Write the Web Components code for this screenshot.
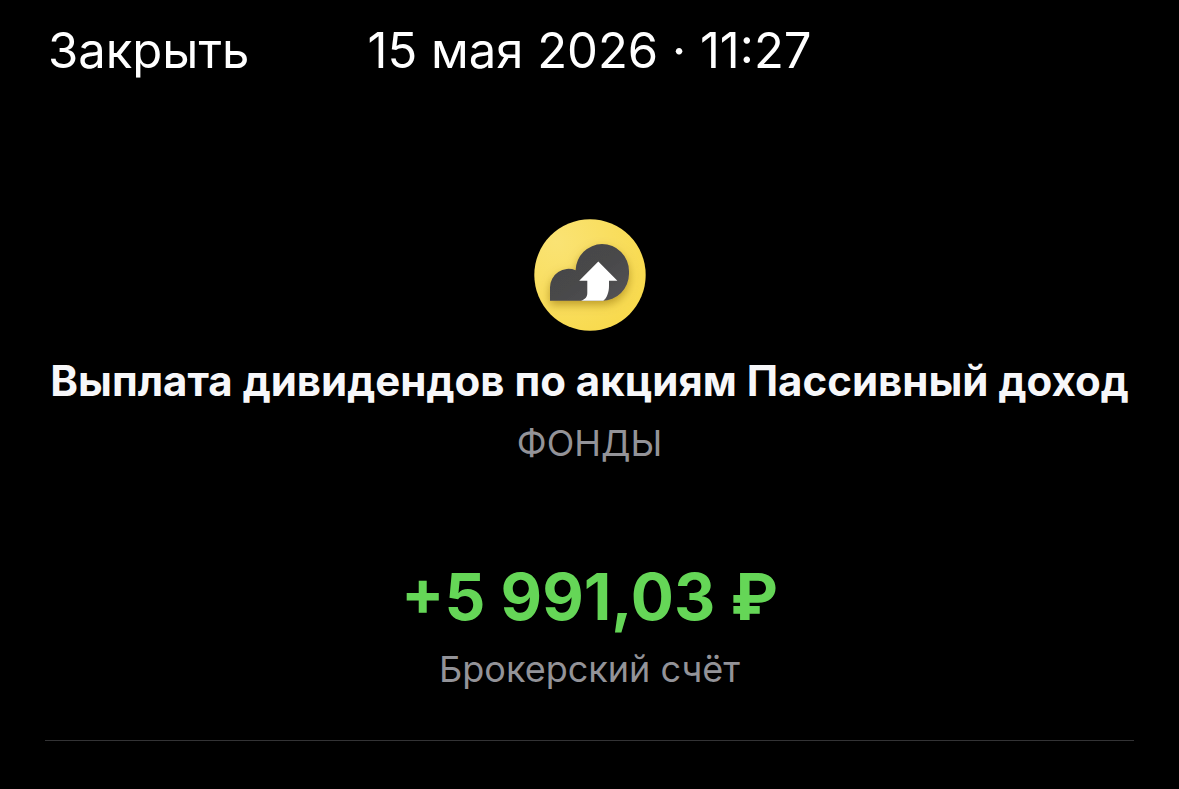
<!DOCTYPE html>
<html lang="ru">
<head>
  <meta charset="utf-8">
  <meta name="viewport" content="width=device-width, initial-scale=1">
  <title>Операция</title>
  <style>
    body {
      margin: 0;
      background-color: #000;
      color: #fff;
      font-family: Inter, "Liberation Sans", sans-serif;
    }
  </style>
</head>
<body>
  <operation-page></operation-page>

  <script>
    class SheetHeader extends HTMLElement {
      constructor() {
        super();
        this.attachShadow({ mode: "open" });
      }

      connectedCallback() {
        this.shadowRoot.innerHTML = `
          <style>
          :host {
            display: grid;
            grid-template-columns: 1fr auto 1fr;
            align-items: center;
            padding: 21px 48px 0;
            font-size: 49px;
            line-height: 60px;
          }
          button {
            justify-self: start;
            padding: 0;
            border: 0;
            background: none;
            color: inherit;
            font: inherit;
            cursor: pointer;
          }
          </style>
          <button type="button">Закрыть</button>
          <slot></slot>
        `;
      }
    }

    class FundLogo extends HTMLElement {
      constructor() {
        super();
        this.attachShadow({ mode: "open" });
      }

      connectedCallback() {
        this.shadowRoot.innerHTML = `
          <style>
          :host {
            display: block;
            width: 112px;
            height: 112px;
          }
          svg {
            display: block;
          }
          </style>
          <svg width="112" height="112" viewBox="0 0 112 112" aria-hidden="true">
            <defs>
              <radialGradient id="coin" cx="0.2" cy="0.2" r="0.9">
                <stop offset="0" stop-color="#fae374"/>
                <stop offset="1" stop-color="#f8da4e"/>
              </radialGradient>
              <linearGradient id="cloud" x1="0" y1="0" x2="1" y2="1">
                <stop offset="0" stop-color="#454547"/>
                <stop offset="0.5" stop-color="#48484a"/>
                <stop offset="1" stop-color="#555456"/>
              </linearGradient>
              <filter id="shadow" x="-30%" y="-30%" width="160%" height="170%">
                <feDropShadow dx="0" dy="4" stdDeviation="5" flood-color="#8a6800" flood-opacity="0.55"/>
              </filter>
            </defs>
            <circle cx="56" cy="56" r="55.7" fill="url(#coin)"/>
            <path filter="url(#shadow)" fill="url(#cloud)" d="M16 81.8V68.4A18.6 18.6 0 0 1 41.6 51.2A27 27 0 0 1 68 25A27 27 0 0 1 95 52V55A27 27 0 0 1 68 81.8Z"/>
            <path fill="#fff" d="M64.3 42.6L83.4 61.8H75V67C75 73 73 79 69.3 81.8H47C51 80.5 53.3 78 53.3 74V61.8H45.2Z"/>
          </svg>
        `;
      }
    }

    class OperationSummary extends HTMLElement {
      constructor() {
        super();
        this.attachShadow({ mode: "open" });
      }

      connectedCallback() {
        this.shadowRoot.innerHTML = `
          <style>
          :host {
            display: flex;
            flex-direction: column;
            align-items: center;
            margin: 0 45px;
            padding: 138px 0 49px;
            border-bottom: 1px solid #333335;
            text-align: center;
          }
          h1, p {
            margin: 0;
          }
          h1 {
            margin-top: 25px;
            color: #f7f7f9;
            font-size: 42px;
            font-weight: 700;
            line-height: 50px;
            white-space: nowrap;
          }
          .note {
            margin-top: 15px;
            color: #939398;
            font-size: 36px;
            line-height: 44px;
          }
          .amount {
            margin-top: 93px;
            color: #65d657;
            font-size: 64px;
            font-weight: 700;
            line-height: 78px;
          }
          .amount + .note {
            margin-top: 11px;
          }
          </style>
          <fund-logo></fund-logo>
          <h1><slot name="title"></slot></h1>
          <p class="note"><slot name="category"></slot></p>
          <p class="amount"><slot name="amount"></slot></p>
          <p class="note"><slot name="account"></slot></p>
        `;
      }
    }

    class OperationPage extends HTMLElement {
      constructor() {
        super();
        this.attachShadow({ mode: "open" });
      }

      connectedCallback() {
        this.shadowRoot.innerHTML = `
          <style>
          :host {
            display: block;
          }
          </style>
          <sheet-header><time datetime="2026-05-15T11:27">15 мая 2026 · 11:27</time></sheet-header>
          <operation-summary>
            <span slot="title">Выплата дивидендов по акциям Пассивный доход</span>
            <span slot="category">ФОНДЫ</span>
            <span slot="amount">+5 991,03 ₽</span>
            <span slot="account">Брокерский счёт</span>
          </operation-summary>
        `;
      }
    }

    customElements.define("sheet-header", SheetHeader);
    customElements.define("fund-logo", FundLogo);
    customElements.define("operation-summary", OperationSummary);
    customElements.define("operation-page", OperationPage);
  </script>
</body>
</html>
